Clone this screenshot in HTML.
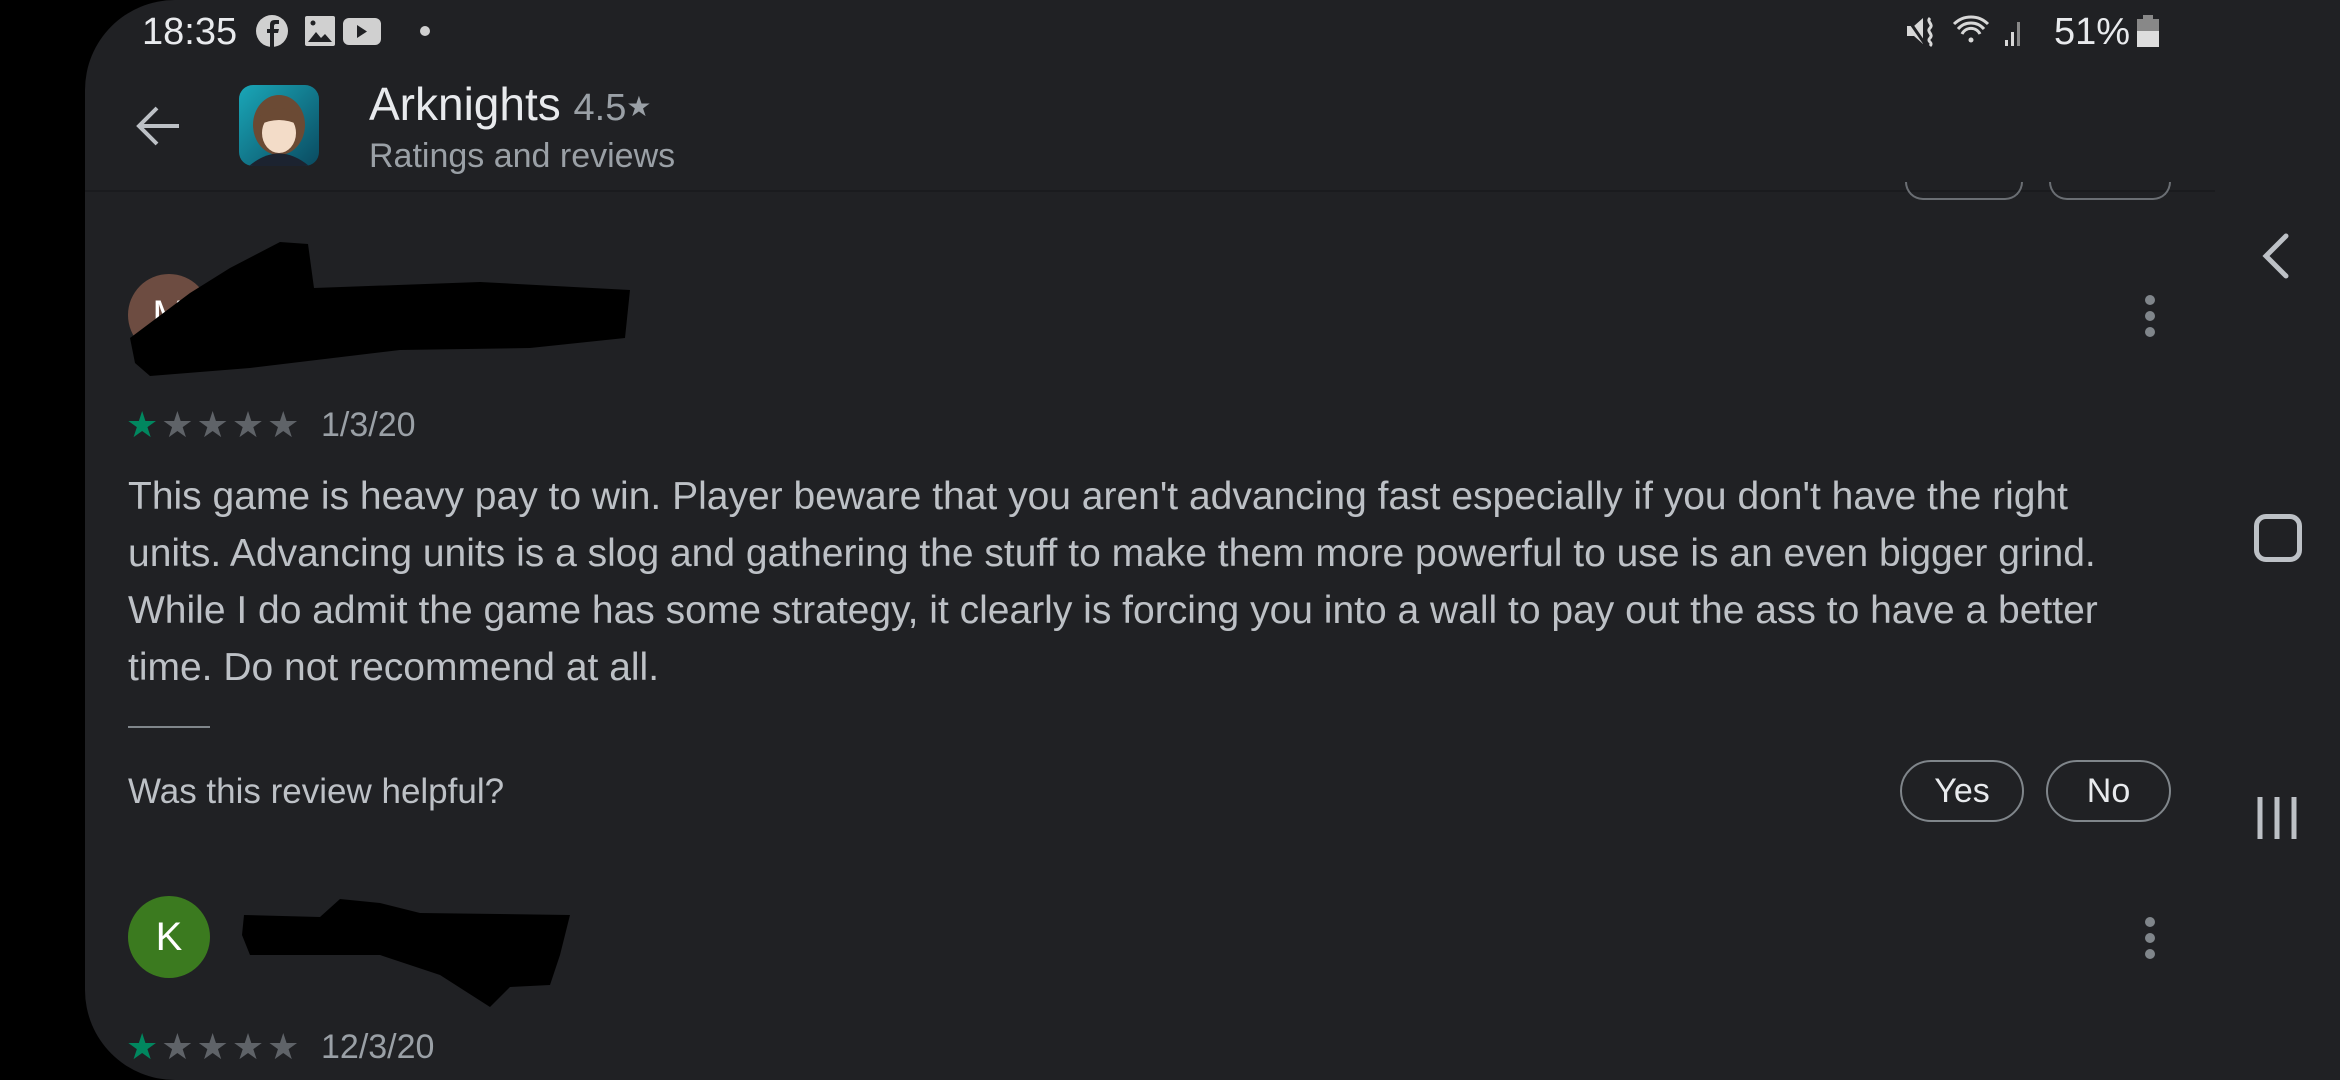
<!DOCTYPE html>
<html><head><meta charset="utf-8"><style>
html,body{margin:0;padding:0;background:#000;}
body{width:2340px;height:1080px;position:relative;overflow:hidden;font-family:"Liberation Sans",sans-serif;}
.scr{position:absolute;left:85px;top:0;width:2255px;height:1080px;background:#202124;border-radius:90px 0 0 90px;}
.a{position:absolute;white-space:nowrap;}
.rev{color:#bdc1c6;font-size:39px;line-height:57px;}
.btn{position:absolute;border:2px solid #80868b;border-radius:32px;color:#e8eaed;font-size:34px;text-align:center;box-sizing:border-box;}
.star{color:#5f6368;}
.st{font-size:36px;letter-spacing:3px;}
</style></head><body>
<div class="scr"></div>
<!-- status bar -->
<div class="a" style="left:142px;top:11px;font-size:38px;color:#e8eaed;">18:35</div>
<svg class="a" style="left:255px;top:13px" width="190" height="42" viewBox="0 0 190 42">
<circle cx="17" cy="18" r="16" fill="#d0d0d0"/><path d="M19 34V20h4l1-4h-5v-3c0-1 .5-2 2-2h3V7h-4c-4 0-5 2-5 5v4h-3v4h3v14z" fill="#202124"/>
<rect x="50" y="3" width="30" height="30" rx="2" fill="#d0d0d0"/><path d="M53 29l8-10 5 6 4-4 7 8z" fill="#202124"/><circle cx="58" cy="10" r="2.5" fill="#202124"/>
<rect x="88" y="5" width="38" height="27" rx="6" fill="#d0d0d0"/><path d="M102 12v13l10-6.5z" fill="#202124"/>
<circle cx="170" cy="18" r="5" fill="#d0d0d0"/>
</svg>
<svg class="a" style="left:1905px;top:14px" width="120" height="36" viewBox="0 0 120 36">
<path d="M2 12h7l9-8v26l-9-8H2z" fill="#d8d8d8"/><path d="M2 4l18 26" stroke="#202124" stroke-width="3"/>
<path d="M25 4c-4 4 4 6 0 10s4 6 0 10 4 4 0 8" stroke="#d8d8d8" stroke-width="3" fill="none"/>
<path d="M49 10a24 24 0 0 1 34 0M53 15a17 17 0 0 1 26 0M57 20a10 10 0 0 1 18 0" stroke="#d8d8d8" stroke-width="3" fill="none"/>
<circle cx="66" cy="26" r="2.5" fill="#d8d8d8"/>
<rect x="100" y="26" width="3" height="6" fill="#d8d8d8"/><rect x="106" y="18" width="3" height="14" fill="#d8d8d8"/><rect x="112" y="8" width="3" height="24" fill="#888"/>
</svg>
<div class="a" style="left:2054px;top:11px;font-size:38px;color:#e8eaed;">51%</div>
<svg class="a" style="left:2137px;top:15px" width="22" height="34"><rect x="6" y="0" width="10" height="4" fill="#888"/><rect x="0" y="4" width="22" height="12" fill="#888"/><rect x="0" y="16" width="22" height="16" fill="#ddd"/></svg>
<!-- header -->
<svg class="a" style="left:135px;top:104px" width="48" height="44" viewBox="0 0 48 44"><path d="M44 22H6M22 4L4 22l18 18" stroke="#bdc1c6" stroke-width="4" fill="none"/></svg>
<div class="a" style="left:239px;top:85px;width:80px;height:81px;border-radius:14px;overflow:hidden;background:linear-gradient(135deg,#1aa7b8,#0a4a60);">
<svg width="80" height="81"><ellipse cx="40" cy="40" rx="26" ry="30" fill="#6b4a34"/><ellipse cx="40" cy="48" rx="17" ry="20" fill="#f3dcc8"/><path d="M20 32q20-18 40 0v8q-20-10-40 0z" fill="#6b4a34"/><path d="M10 81q30-25 60 0z" fill="#1c2330"/></svg></div>
<div class="a" style="left:369px;top:77px;font-size:46px;color:#e8eaed;">Arknights <span style="font-size:38px;color:#9aa0a6;">4.5<span style="font-size:28px;position:relative;top:-4px">★</span></span></div>
<div class="a" style="left:369px;top:137px;font-size:34px;color:#9aa0a6;">Ratings and reviews</div>
<div class="a" style="left:85px;top:190px;width:2130px;height:2px;background:#1a1b1e;"></div>
<div class="a" style="left:1905px;top:182px;width:114px;height:16px;border:2px solid #6a6e73;border-top:none;border-radius:0 0 30px 30px;"></div>
<div class="a" style="left:2049px;top:182px;width:118px;height:16px;border:2px solid #6a6e73;border-top:none;border-radius:0 0 30px 30px;"></div>
<!-- nav -->
<svg class="a" style="left:2260px;top:232px" width="32" height="48"><path d="M26 4L6 24l20 20" stroke="#bdc1c6" stroke-width="5" fill="none" stroke-linecap="round"/></svg>
<div class="a" style="left:2254px;top:514px;width:38px;height:38px;border:5px solid #bdc1c6;border-radius:12px;"></div>
<svg class="a" style="left:2255px;top:795px" width="44" height="46"><path d="M5 2v42M22 2v42M39 2v42" stroke="#bdc1c6" stroke-width="5"/></svg>
<!-- review 1 -->
<div class="a" style="left:128px;top:274px;width:82px;height:82px;border-radius:50%;background:#6d4c41;color:#fff;font-size:40px;line-height:82px;text-align:center;">M</div>
<svg class="a" style="left:130px;top:238px" width="510" height="150" viewBox="0 0 510 150"><path d="M0 100L60 55 100 30 150 4 178 6 184 50 350 44 500 52 495 100 400 110 270 112 120 130 20 138 5 125z" fill="#000"/></svg>
<svg class="a" style="left:2140px;top:295px" width="20" height="42"><circle cx="10" cy="5" r="5" fill="#80868b"/><circle cx="10" cy="21" r="5" fill="#80868b"/><circle cx="10" cy="37" r="5" fill="#80868b"/></svg>
<div class="a st" style="left:126px;top:404px;"><span style="color:#01875f">★</span><span class="star">★★★★</span></div>
<div class="a" style="left:321px;top:406px;font-size:34px;color:#9aa0a6;">1/3/20</div>
<div class="a rev" style="left:128px;top:468px;">This game is heavy pay to win. Player beware that you aren't advancing fast especially if you don't have the right<br>units. Advancing units is a slog and gathering the stuff to make them more powerful to use is an even bigger grind.<br>While I do admit the game has some strategy, it clearly is forcing you into a wall to pay out the ass to have a better<br>time. Do not recommend at all.</div>
<div class="a" style="left:128px;top:726px;width:82px;height:2px;background:#80868b;"></div>
<div class="a" style="left:128px;top:772px;font-size:35px;color:#bdc1c6;">Was this review helpful?</div>
<div class="btn" style="left:1900px;top:760px;width:124px;height:62px;line-height:58px;">Yes</div>
<div class="btn" style="left:2046px;top:760px;width:125px;height:62px;line-height:58px;">No</div>
<!-- review 2 -->
<div class="a" style="left:128px;top:896px;width:82px;height:82px;border-radius:50%;background:#3b7a1f;color:#fff;font-size:40px;line-height:82px;text-align:center;">K</div>
<svg class="a" style="left:240px;top:895px" width="332" height="116" viewBox="0 0 332 116"><path d="M4 20L80 22 100 4 140 8 180 18 330 20 320 60 310 90 270 92 250 112 200 80 140 60 10 60 2 40z" fill="#000"/></svg>
<svg class="a" style="left:2140px;top:917px" width="20" height="42"><circle cx="10" cy="5" r="5" fill="#80868b"/><circle cx="10" cy="21" r="5" fill="#80868b"/><circle cx="10" cy="37" r="5" fill="#80868b"/></svg>
<div class="a st" style="left:126px;top:1026px;"><span style="color:#01875f">★</span><span class="star">★★★★</span></div>
<div class="a" style="left:321px;top:1028px;font-size:34px;color:#9aa0a6;">12/3/20</div>
</body></html>
